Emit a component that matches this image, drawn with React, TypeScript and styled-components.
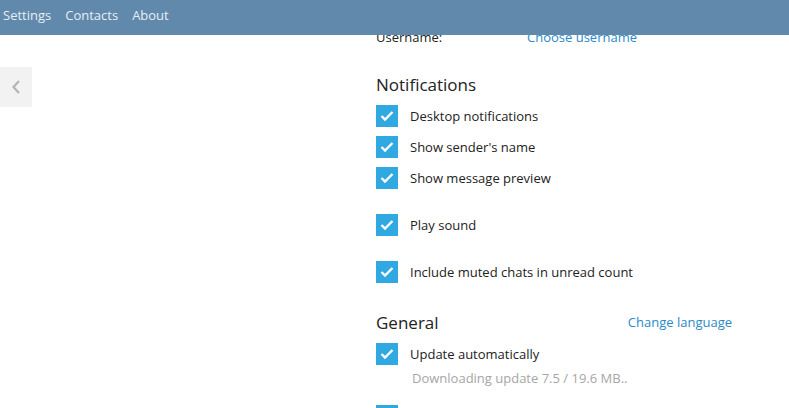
import React from 'react';
import styled, { createGlobalStyle } from 'styled-components';

const GlobalStyle = createGlobalStyle`
	html, body {
		margin: 0;
		padding: 0;
		background: #fff;
		overflow: hidden;
	}
	body {
		font-family: 'Open Sans', 'Liberation Sans', sans-serif;
		color: #222;
	}
`;

const Page = styled.div`
	width: 789px;
	height: 408px;
	overflow: hidden;
	display: flex;
	flex-direction: column;
`;

const Header = styled.nav`
	height: 35px;
	flex-shrink: 0;
	background: #6189ab;
	display: flex;
	align-items: center;
	gap: 14px;
	padding: 0 0 0 3px;
	position: relative;
	z-index: 2;
`;

const NavLink = styled.span`
	font-size: 13px;
	color: #e6eef5;
	line-height: 16px;
	padding-bottom: 5px;
`;

const Body = styled.div`
	display: flex;
	flex: 1;
	overflow: hidden;
`;

const Side = styled.div`
	width: 376px;
	flex-shrink: 0;
	padding-top: 32px;
`;

const BackButton = styled.div`
	width: 32px;
	height: 40px;
	background: #f2f2f2;
	display: flex;
	align-items: center;
	justify-content: center;
	color: #b4b4b4;
`;

const Content = styled.div`
	width: 356px;
	margin-top: -11px;
`;

const FieldRow = styled.div`
	display: flex;
	height: 26px;
	align-items: center;
	font-size: 13px;
`;

const FieldLabel = styled.span`
	width: 151px;
	color: #222;
`;

const Link = styled.span`
	color: #2a8ac9;
	font-size: 13px;
	cursor: pointer;
`;

const SectionHead = styled.div<{ $top: number }>`
	display: flex;
	justify-content: space-between;
	align-items: center;
	margin-top: ${({ $top }) => $top}px;
	height: 24px;
`;

const SectionTitle = styled.h3`
	margin: 0;
	font-size: 17px;
	font-weight: 400;
	color: #222;
`;

const Option = styled.label<{ $top: number }>`
	display: flex;
	align-items: center;
	gap: 12px;
	height: 22px;
	margin-top: ${({ $top }) => $top}px;
	font-size: 13px;
	color: #222;
`;

const Box = styled.span<{ $on: boolean }>`
	width: 22px;
	height: 22px;
	flex-shrink: 0;
	background: ${({ $on }) => ($on ? '#30a9e3' : '#d0d0d0')};
	display: flex;
`;

const Note = styled.div`
	margin: 4px 0 0 36px;
	font-size: 13px;
	color: #a6a6a6;
`;

const Check = () => (
	<svg width="22" height="22" viewBox="0 0 22 22">
		<path d="M5.5 11 L9 14.5 L16.5 7" fill="none" stroke="#fff" strokeWidth="2.4" />
	</svg>
);

type CheckOptionProps = {
	label: string;
	top: number;
	checked?: boolean;
};

const CheckOption = function ({ label, top, checked = true }: CheckOptionProps) {
	return (
		<Option $top={top}>
			<Box $on={checked}>{checked && <Check />}</Box>
			<span>{label}</span>
		</Option>
	);
};

const App = function () {
	return (
		<Page>
			<GlobalStyle />
			<Header>
				<NavLink>Settings</NavLink>
				<NavLink>Contacts</NavLink>
				<NavLink>About</NavLink>
			</Header>
			<Body>
				<Side>
					<BackButton>
						<svg width="10" height="16" viewBox="0 0 10 16">
							<path d="M8 2 L2.5 8 L8 14" fill="none" stroke="currentColor" strokeWidth="2.2" />
						</svg>
					</BackButton>
				</Side>
				<Content>
					<FieldRow>
						<FieldLabel>Username:</FieldLabel>
						<Link>Choose username</Link>
					</FieldRow>
					<SectionHead $top={22}>
						<SectionTitle>Notifications</SectionTitle>
					</SectionHead>
					<CheckOption top={9} label="Desktop notifications" />
					<CheckOption top={9} label="Show sender's name" />
					<CheckOption top={9} label="Show message preview" />
					<CheckOption top={25} label="Play sound" />
					<CheckOption top={25} label="Include muted chats in unread count" />
					<SectionHead $top={27}>
						<SectionTitle>General</SectionTitle>
						<Link>Change language</Link>
					</SectionHead>
					<CheckOption top={9} label="Update automatically" />
					<Note>Downloading update 7.5 / 19.6 MB..</Note>
					<CheckOption top={18} label="" />
				</Content>
			</Body>
		</Page>
	);
};

export default App;
